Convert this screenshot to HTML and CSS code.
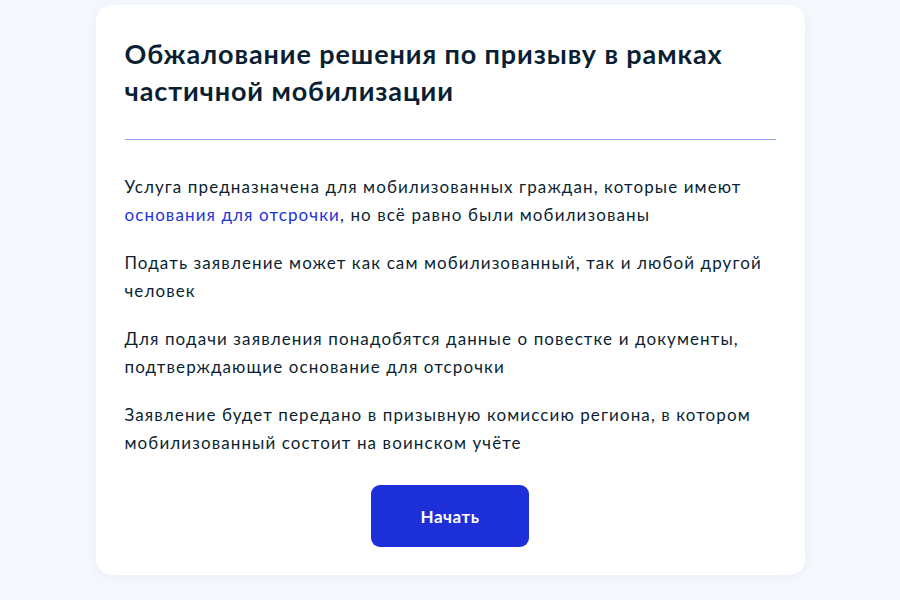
FILE: index.html
```html
<!DOCTYPE html>
<html lang="ru">
<head>
<meta charset="utf-8">
<title>Обжалование решения</title>
<link rel="stylesheet" href="styles.css">
</head>
<body>
<main class="page">
  <section class="card">
    <h1 class="title">Обжалование решения по призыву в рамках частичной мобилизации</h1>
    <hr class="divider">
    <p class="text">Услуга предназначена для мобилизованных граждан, которые имеют <a class="link" href="#">основания для отсрочки</a>, но всё равно были мобилизованы</p>
    <p class="text">Подать заявление может как сам мобилизованный, так и любой другой человек</p>
    <p class="text">Для подачи заявления понадобятся данные о повестке и документы, подтверждающие основание для отсрочки</p>
    <p class="text">Заявление будет передано в призывную комиссию региона, в котором мобилизованный состоит на воинском учёте</p>
    <div class="actions">
      <button class="btn" type="button">Начать</button>
    </div>
  </section>
</main>
</body>
</html>
```
FILE: styles.css
```css
html, body {
  margin: 0;
  padding: 0;
  height: 100%;
}
body {
  background: #f6f8fe;
  font-family: Lato, "Noto Sans", sans-serif;
  color: #0b1f33;
}
.page {
  display: flex;
  justify-content: center;
  padding-top: 5px;
}
.card {
  box-sizing: border-box;
  width: 709px;
  height: 570px;
  background: #ffffff;
  border-radius: 16px;
  box-shadow: 0 2px 12px rgba(100, 120, 180, 0.08);
  padding: 30px 29px 28px 29px;
}
.title {
  margin: 0;
  font-size: 27px;
  line-height: 37px;
  font-weight: 700;
  letter-spacing: 0.9px;
  color: #0b1f33;
}
.divider {
  border: 0;
  height: 1px;
  background: #93a8f0;
  margin: 30px 0 33px 0;
}
.text {
  margin: 0 0 20px 0;
  font-size: 17px;
  line-height: 28px;
  letter-spacing: 1.1px;
}
.link {
  color: #2233d6;
  text-decoration: none;
}
.actions {
  display: flex;
  justify-content: center;
  padding-top: 8px;
}
.btn {
  width: 158px;
  height: 62px;
  background: #1d2fd8;
  color: #ffffff;
  border: 0;
  border-radius: 9px;
  font-family: Lato, "Noto Sans", sans-serif;
  font-weight: 700;
  font-size: 17px;
  letter-spacing: 0.5px;
}
```
